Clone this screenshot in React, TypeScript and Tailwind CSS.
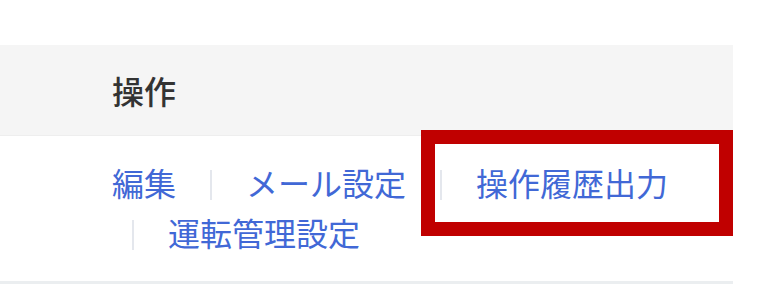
import React from "react";

const links = ["編集", "メール設定", "操作履歴出力", "運転管理設定"];

export default function App() {
  return (
    <div
      className="relative h-[303px] w-[768px] overflow-hidden bg-white pt-[45px]"
      style={{ fontFamily: '"Noto Sans CJK JP", "Noto Sans", sans-serif' }}
    >
      <div className="w-[733px]">
        {/* header */}
        <div className="flex h-[91px] items-center bg-[#f5f5f5] pl-[112px] border-b border-[#eeeeee]">
          <span className="text-[32px] font-medium leading-none text-[#333333]">操作</span>
        </div>

        {/* body */}
        <div className="border-b-[3px] border-[#ebeef0] pt-[21px] pb-[24px] pl-[112px] pr-[20px]">
          <div className="flex flex-wrap gap-x-[14px] text-[32px] leading-[50px] text-[#4168d6]">
            {links.map((label, i) => (
              <div key={label} className="flex items-center">
                {i > 0 && (
                  <span className="ml-[20px] mr-[34px] mt-[6px] h-[30px] w-[2px] bg-[#e4e7ed]" />
                )}
                <a className="cursor-pointer whitespace-nowrap">{label}</a>
              </div>
            ))}
          </div>
        </div>
      </div>

      {/* annotation box */}
      <div className="absolute left-[421px] top-[130px] h-[106px] w-[312px] border-[14px] border-[#c00000]" />
    </div>
  );
}
